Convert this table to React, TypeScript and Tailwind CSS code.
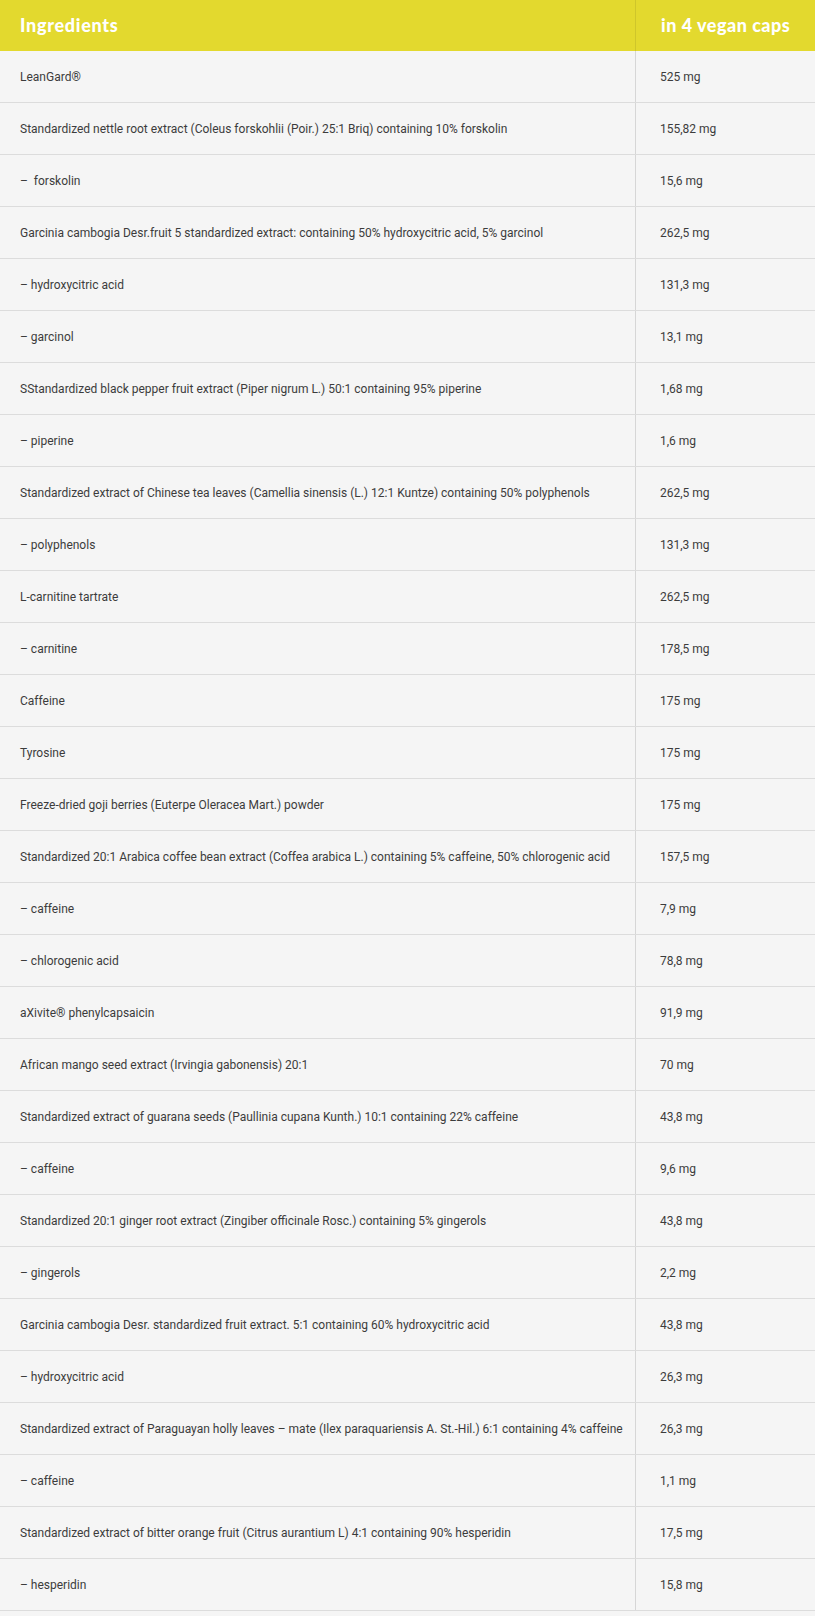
import React from 'react';

type Row = { name: string; amount: string };

const rows: Row[] = [
  { name: 'LeanGard®', amount: '525 mg' },
  { name: 'Standardized nettle root extract (Coleus forskohlii (Poir.) 25:1 Briq) containing 10% forskolin', amount: '155,82 mg' },
  { name: '–  forskolin', amount: '15,6 mg' },
  { name: 'Garcinia cambogia Desr.fruit 5 standardized extract: containing 50% hydroxycitric acid, 5% garcinol', amount: '262,5 mg' },
  { name: '– hydroxycitric acid', amount: '131,3 mg' },
  { name: '– garcinol', amount: '13,1 mg' },
  { name: 'SStandardized black pepper fruit extract (Piper nigrum L.) 50:1 containing 95% piperine', amount: '1,68 mg' },
  { name: '– piperine', amount: '1,6 mg' },
  { name: 'Standardized extract of Chinese tea leaves (Camellia sinensis (L.) 12:1 Kuntze) containing 50% polyphenols', amount: '262,5 mg' },
  { name: '– polyphenols', amount: '131,3 mg' },
  { name: 'L-carnitine tartrate', amount: '262,5 mg' },
  { name: '– carnitine', amount: '178,5 mg' },
  { name: 'Caffeine', amount: '175 mg' },
  { name: 'Tyrosine', amount: '175 mg' },
  { name: 'Freeze-dried goji berries (Euterpe Oleracea Mart.) powder', amount: '175 mg' },
  { name: 'Standardized 20:1 Arabica coffee bean extract (Coffea arabica L.) containing 5% caffeine, 50% chlorogenic acid', amount: '157,5 mg' },
  { name: '– caffeine', amount: '7,9 mg' },
  { name: '– chlorogenic acid', amount: '78,8 mg' },
  { name: 'aXivite® phenylcapsaicin', amount: '91,9 mg' },
  { name: 'African mango seed extract (Irvingia gabonensis) 20:1', amount: '70 mg' },
  { name: 'Standardized extract of guarana seeds (Paullinia cupana Kunth.) 10:1 containing 22% caffeine', amount: '43,8 mg' },
  { name: '– caffeine', amount: '9,6 mg' },
  { name: 'Standardized 20:1 ginger root extract (Zingiber officinale Rosc.) containing 5% gingerols', amount: '43,8 mg' },
  { name: '– gingerols', amount: '2,2 mg' },
  { name: 'Garcinia cambogia Desr. standardized fruit extract. 5:1 containing 60% hydroxycitric acid', amount: '43,8 mg' },
  { name: '– hydroxycitric acid', amount: '26,3 mg' },
  { name: 'Standardized extract of Paraguayan holly leaves – mate (Ilex paraquariensis A. St.-Hil.) 6:1 containing 4% caffeine', amount: '26,3 mg' },
  { name: '– caffeine', amount: '1,1 mg' },
  { name: 'Standardized extract of bitter orange fruit (Citrus aurantium L) 4:1 containing 90% hesperidin', amount: '17,5 mg' },
  { name: '– hesperidin', amount: '15,8 mg' },
];

const App: React.FC = () => {
  return (
    <div className="w-[815px] min-h-[1616px] bg-[#f5f5f5] font-['Roboto',sans-serif]">
      <div className="grid grid-cols-[636px_1fr] h-[51px] bg-[#e3d92e]">
        <div className="flex items-center pl-5 border-r border-[#cfc62a]">
          <span className="font-['Lato',sans-serif] font-black text-[18px] text-white tracking-[0.7px]">Ingredients</span>
        </div>
        <div className="flex items-center pl-[25px]">
          <span className="font-['Lato',sans-serif] font-black text-[18px] text-white tracking-[0.5px]">in 4 vegan caps</span>
        </div>
      </div>
      {rows.map((row, i) => (
        <div key={i} className="grid grid-cols-[636px_1fr] h-[52px] border-b border-[#dcdcdc]">
          <div className="flex items-center pl-5 border-r border-[#d6d6d6] text-[12px] text-[#3c3c3c] whitespace-pre">
            {row.name}
          </div>
          <div className="flex items-center pl-6 text-[12px] text-[#3c3c3c]">
            {row.amount}
          </div>
        </div>
      ))}
    </div>
  );
};

export default App;
